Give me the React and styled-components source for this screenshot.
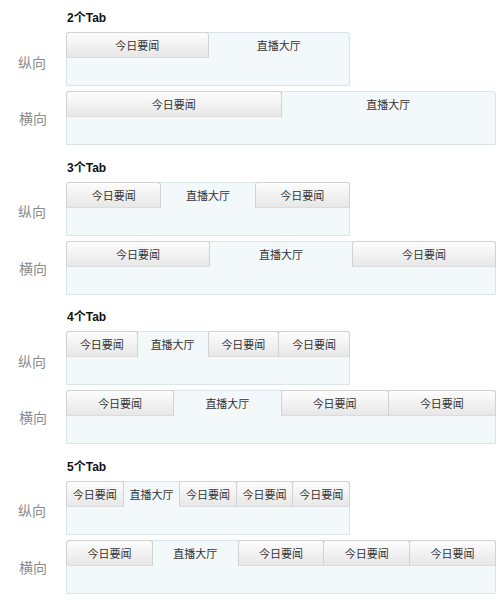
import React from 'react';
import styled, { createGlobalStyle } from 'styled-components';

const GlobalStyle = createGlobalStyle`
  body {
    margin: 0;
    background: #fff;
    font-family: "Liberation Sans", Arial, "Noto Sans CJK SC", sans-serif;
  }
`;

const sections = [2, 3, 4, 5];

const Page = styled.div`
  width: 500px;
  padding-top: 11px;
`;

const Section = styled.section`
  margin-bottom: 15.5px;
`;

const Title = styled.div`
  margin-left: 67px;
  height: 14px;
  line-height: 14px;
  font-size: 12px;
  font-weight: 700;
  color: #111;
  margin-bottom: 7px;
`;

const Row = styled.div`
  display: flex;
  align-items: center;
  & + & {
    margin-top: 5px;
  }
`;

const Label = styled.div`
  width: 66px;
  flex: none;
  box-sizing: border-box;
  padding-right: ${p => (p.$wide ? 19 : 20)}px;
  text-align: right;
  font-size: 14px;
  color: #8c8c8c;
  padding-top: ${p => (p.$wide ? 0 : 5)}px;
`;

const Box = styled.div`
  width: ${p => p.$width}px;
  height: 54px;
  box-sizing: border-box;
  background: #f3f8fb;
  border: 1px solid #dbe4ea;
  border-radius: 3px 3px 0 0;
  display: flex;
  flex-direction: column;
`;

const TabBar = styled.div`
  display: flex;
  height: 26px;
  margin: -1px -1px 0;
`;

const Tab = styled.div`
  flex: 1;
  min-width: 0;
  box-sizing: border-box;
  display: flex;
  align-items: center;
  justify-content: center;
  font-size: 11px;
  color: #333;
  white-space: nowrap;
  border-radius: 3px 3px 0 0;
  border: 1px solid ${p => (p.$active ? 'transparent' : '#d2d2d2')};
  border-bottom-color: ${p => (p.$active ? 'transparent' : '#dcdcdc')};
  background: ${p =>
    p.$active ? 'transparent' : 'linear-gradient(#fdfdfd, #e7e7e7)'};
  & + & {
    margin-left: -1px;
  }
`;

const TabGroup = ({ count, width }) => (
  <Box $width={width}>
    <TabBar>
      {Array.from({ length: count }).map((_, i) => (
        <Tab key={i} $active={i === 1}>
          {i === 1 ? '直播大厅' : '今日要闻'}
        </Tab>
      ))}
    </TabBar>
  </Box>
);

const App = () => (
  <Page>
    <GlobalStyle />
    {sections.map(count => (
      <Section key={count}>
        <Title>{count}个Tab</Title>
        <Row>
          <Label>纵向</Label>
          <TabGroup count={count} width={284} />
        </Row>
        <Row>
          <Label $wide>横向</Label>
          <TabGroup count={count} width={430} />
        </Row>
      </Section>
    ))}
  </Page>
);

export default App;
